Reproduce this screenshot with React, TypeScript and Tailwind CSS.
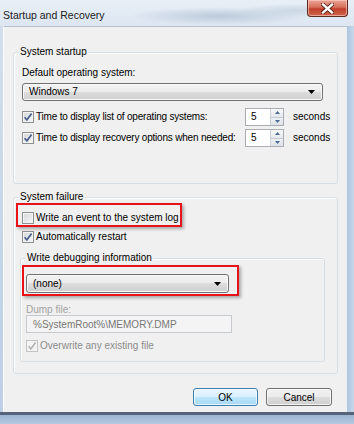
import React from 'react'

function Tick({ color }: { color: string }) {
  return (
    <svg width="10" height="10" viewBox="0 0 10 10">
      <path d="M1.6 5.2 L3.9 7.8 L8.6 1.6" fill="none" stroke={color} strokeWidth="1.7" />
    </svg>
  )
}

function Check({ checked, disabled }: { checked?: boolean; disabled?: boolean }) {
  return (
    <span
      className={
        disabled
          ? 'flex h-[12px] w-[12px] shrink-0 items-center justify-center border border-[#c3c3c3] bg-[#f4f4f4]'
          : 'flex h-[12px] w-[12px] shrink-0 items-center justify-center border border-[#8e8f8f] bg-[linear-gradient(135deg,#d4d6d9,#f7f7f7)] shadow-[inset_0_0_0_1px_#f4f4f4]'
      }
    >
      {checked && <Tick color={disabled ? '#b4b4b4' : '#4a5f8c'} />}
    </span>
  )
}

function Combo({ value, className }: { value: string; className: string }) {
  return (
    <div
      className={`flex items-center justify-between rounded-[3px] border border-[#707070] bg-[linear-gradient(#f3f3f3,#ebebeb_50%,#dddddd_50%,#cfcfcf)] pl-[6px] pr-[7px] shadow-[inset_0_0_0_1px_#fafafa] ${className}`}
    >
      <span className="leading-[12px]">{value}</span>
      <svg width="7" height="4" viewBox="0 0 7 4">
        <path d="M0 0h7L3.5 4z" fill="#000" />
      </svg>
    </div>
  )
}

function Spin() {
  return (
    <div className="flex h-[18px] w-[39px] shrink-0 border border-[#abadb3] bg-white">
      <span className="flex-1 pl-[5px] leading-[16px]">5</span>
      <div className="flex w-[13px] flex-col border-l border-[#cdd1d7]">
        <span className="flex flex-1 items-center justify-center border-b border-[#c5cad1] bg-[linear-gradient(#f8f8f8,#e4e8ee)]">
          <svg width="5" height="3" viewBox="0 0 5 3">
            <path d="M0 3h5L2.5 0z" fill="#4d6a91" />
          </svg>
        </span>
        <span className="flex flex-1 items-center justify-center bg-[linear-gradient(#eef1f4,#dde2e8)]">
          <svg width="5" height="3" viewBox="0 0 5 3">
            <path d="M0 0h5L2.5 3z" fill="#4d6a91" />
          </svg>
        </span>
      </div>
    </div>
  )
}

function Legend({ text }: { text: string }) {
  return (
    <div className="-mt-[7px] ml-[5px] h-[12px] w-fit bg-[#f0f0f0] px-[1px] leading-[12px]">{text}</div>
  )
}

function TimeRow({ label }: { label: string }) {
  return (
    <div className="flex h-[18px] items-center whitespace-nowrap">
      <div className="flex w-[223px] min-w-0 shrink-0 items-center gap-[2px]">
        <Check checked />
        <span className="leading-[12px] tracking-[-0.2px]">{label}</span>
      </div>
      <Spin />
      <span className="ml-[9px] leading-[12px]">seconds</span>
    </div>
  )
}

export default function App() {
  return (
    <div className="flex h-[424px] w-[354px] flex-col overflow-hidden bg-[#c6d6ea] font-['Liberation_Sans',Arial,sans-serif] text-[10px] text-black">
      {/* title bar */}
      <div className="flex h-[26px] items-start justify-between bg-[radial-gradient(ellipse_90px_9px_at_62%_62%,#bccadb,transparent),radial-gradient(ellipse_60px_7px_at_84%_40%,#cbd7e4,transparent),linear-gradient(#e8eff7,#dde6f1)]">
        <span className="pl-[3px] pt-[9px] text-[10.5px] leading-[12px] text-[#1b1b1b]">Startup and Recovery</span>
        <div className="mr-[6px] flex h-[17px] w-[41px] items-center justify-center rounded-b-[4px] border border-t-0 border-[#5d2a22] bg-[linear-gradient(#eaa596,#d7705c_45%,#c0402a_55%,#d0684e)] shadow-[inset_0_0_0_1px_rgba(255,210,200,0.6)]">
          <svg width="13" height="11" viewBox="0 0 13 11">
            <path d="M2 1.5 L11 9.5 M11 1.5 L2 9.5" stroke="#4a1a12" strokeWidth="4" strokeLinecap="square" />
            <path d="M2 1.5 L11 9.5 M11 1.5 L2 9.5" stroke="#ffffff" strokeWidth="2.4" strokeLinecap="square" />
          </svg>
        </div>
      </div>

      <div className="flex h-[386px]">
        <div className="w-[3px] bg-[linear-gradient(#d2deec,#bccfe6)]" />
        {/* client */}
        <div className="flex w-[344px] flex-col border-l border-t border-l-[#fbfcfd] border-t-[#b5c1cf] bg-[#f0f0f0] pl-[9px] pr-[9px]">
          {/* System startup */}
          <div className="mt-[25px] flex h-[132px] flex-col rounded-[3px] border border-[#d5dfe5] pl-[8px] pr-[14px] shadow-[inset_1px_1px_0_#fff]">
            <div className="-ml-[8px]">
              <Legend text="System startup" />
            </div>
            <div className="mt-[9px] h-[12px] leading-[12px]">Default operating system:</div>
            <Combo value="Windows 7" className="mt-[4px] h-[18px] w-full" />
            <div className="mt-[7px]">
              <TimeRow label="Time to display list of operating systems:" />
            </div>
            <div className="mt-[3px]">
              <TimeRow label="Time to display recovery options when needed:" />
            </div>
          </div>

          {/* System failure */}
          <div className="mt-[13px] flex h-[177px] flex-col rounded-[3px] border border-[#d5dfe5] shadow-[inset_1px_1px_0_#fff]">
            <Legend text="System failure" />
            <div className="ml-[2px] flex h-[24px] w-[166px] items-start gap-[2px] border-2 border-[#e8121b] pl-[4px] pt-[7px] shadow-[2px_2px_3px_rgba(0,0,0,0.3)]">
              <Check />
              <span className="leading-[12px]">Write an event to the system log</span>
            </div>
            <div className="ml-[8px] mt-[4px] flex h-[12px] items-center gap-[2px]">
              <Check checked />
              <span className="leading-[12px]">Automatically restart</span>
            </div>

            {/* Write debugging information */}
            <div className="ml-[6px] mr-[12px] mt-[15px] flex h-[104px] flex-col rounded-[3px] border border-[#d5dfe5] shadow-[inset_1px_1px_0_#fff]">
              <Legend text="Write debugging information" />
              <div className="ml-[1px] mt-[1px] h-[31px] w-[217px] border-2 border-[#e8121b] pl-[2px] pt-[7px] shadow-[2px_2px_3px_rgba(0,0,0,0.3)]">
                <Combo value="(none)" className="h-[19px] w-[203px]" />
              </div>
              <div className="ml-[5px] mt-[8px] h-[11px] leading-[11px] text-[#a3a3a3]">Dump file:</div>
              <div className="ml-[5px] flex h-[18px] w-[206px] items-center border border-[#c6c9ce] bg-[#f4f4f4] pl-[6px] text-[#777]">
                %SystemRoot%\MEMORY.DMP
              </div>
              <div className="ml-[5px] mt-[7px] flex h-[12px] items-center gap-[2px] text-[#8c8c8c]">
                <Check checked disabled />
                <span className="leading-[12px]">Overwrite any existing file</span>
              </div>
            </div>
          </div>

          {/* buttons */}
          <div className="mr-[6px] mt-[14px] flex justify-end gap-[8px]">
            <div className="flex h-[18px] w-[65px] items-center justify-center rounded-[3px] border border-[#3c7fb1] bg-[linear-gradient(#eaf6fd,#d9f0fc_50%,#bee6fd_50%,#a7d9f5)] shadow-[inset_0_0_0_1px_rgba(255,255,255,0.7)]">
              OK
            </div>
            <div className="flex h-[18px] w-[66px] items-center justify-center rounded-[3px] border border-[#707070] bg-[linear-gradient(#f2f2f2,#ebebeb_50%,#dddddd_50%,#cfcfcf)] shadow-[inset_0_0_0_1px_rgba(255,255,255,0.7)]">
              Cancel
            </div>
          </div>
        </div>
        <div className="w-[7px] bg-[linear-gradient(90deg,#aec4de,#c8d8ec)]" />
      </div>

      {/* bottom frame */}
      <div className="h-[12px] border-t-[3px] border-[#56647a] bg-[linear-gradient(#9db4d0,#b6c9e0)]" />
    </div>
  )
}
